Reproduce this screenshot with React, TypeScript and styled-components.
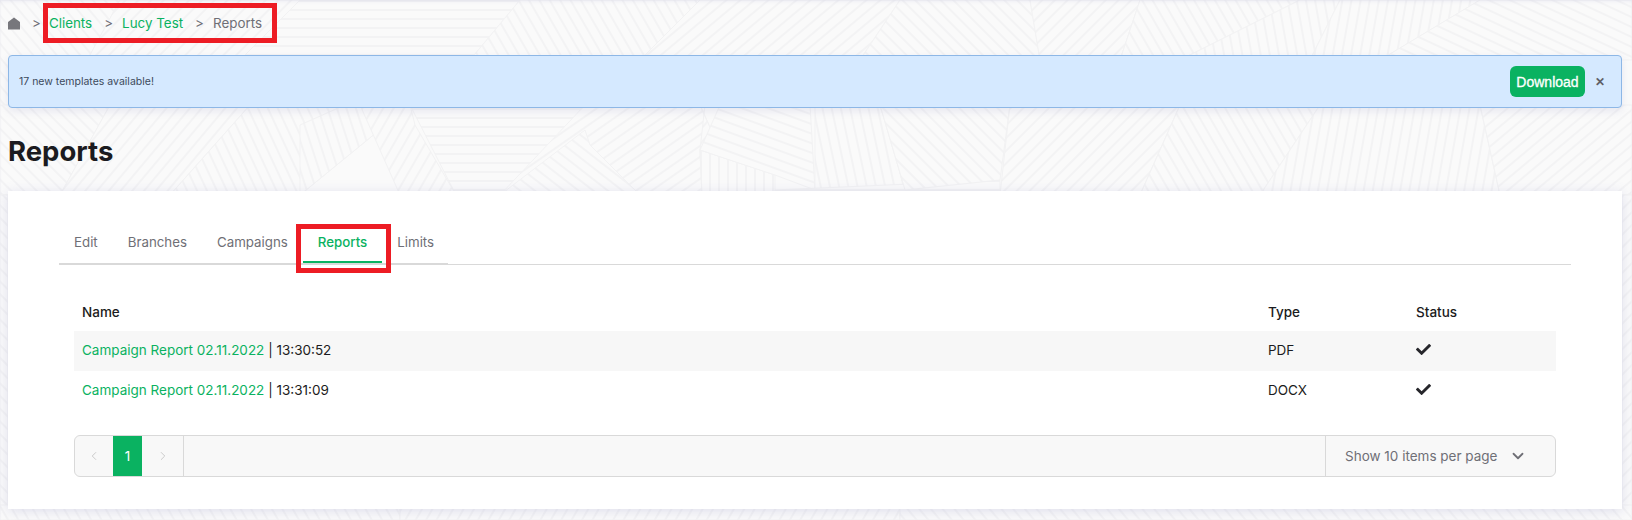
import React from "react";
import styled, { createGlobalStyle } from "styled-components";
import { ChevronDown, ChevronLeft, ChevronRight } from "lucide-react";
import { FaCheck } from "react-icons/fa";

// colors
const green = "#0ab261";
const grey = "#6f6f76";
const dark = "#1b1b20";
const redMark = "#ed1c24";
const lineColor = "#d9d9d9";

const tabs = ["Edit", "Branches", "Campaigns", "Reports", "Limits"];

const reports = [
  { name: "Campaign Report 02.11.2022", time: "13:30:52", type: "PDF" },
  { name: "Campaign Report 02.11.2022", time: "13:31:09", type: "DOCX" },
];

// hatched patches of the page wallpaper: points + stripe angle
const patches: [string, number][] = [
  ["0,0 120,0 60,110 0,150", 50],
  ["120,0 300,0 240,60 60,110", 135],
  ["300,0 520,0 470,60 240,60", 0],
  ["520,0 700,0 640,60 470,60", 60],
  ["700,0 900,0 860,60 640,60", 140],
  ["900,0 1030,0 1040,60 860,60", 45],
  ["1030,0 1140,0 1120,60 1040,60", 135],
  ["1140,0 1300,0 1180,60 1120,60", 60],
  ["1300,0 1340,0 1310,60 1180,60", 80],
  ["1340,0 1480,0 1380,60 1310,60", 100],
  ["1480,0 1632,0 1632,60 1380,60", 25],
  ["0,105 110,105 60,195 0,195", 45],
  ["110,105 250,105 170,195 60,195", 130],
  ["250,105 410,105 300,195 170,195", 65],
  ["300,195 410,105 345,105 300,125", 72],
  ["410,105 585,105 520,195 456,195", 0],
  ["410,105 415,125 456,195 400,195 360,105", 120],
  ["585,105 700,105 740,195 500,195", 145],
  ["585,130 590,145 640,195 500,195", 38],
  ["700,105 705,105 700,150 702,195 740,195", 130],
  ["700,150 775,175 775,195 702,195", 90],
  ["700,150 720,105 810,105 815,190 775,175", 20],
  ["815,105 880,105 905,190 815,190", 78],
  ["775,190 1000,180 1000,195 775,195", 0],
  ["880,105 1010,105 1000,180 905,190", 45],
  ["1010,105 1180,105 1140,195 1000,195", 135],
  ["1180,105 1320,105 1260,195 1140,195", 60],
  ["1320,105 1480,105 1500,195 1260,195", 100],
  ["1480,105 1632,105 1632,195 1500,195", 140],
  ["0,195 8,195 8,520 0,520", 45],
  ["1622,195 1632,195 1632,520 1622,520", 135],
  ["0,505 400,505 400,520 0,520", 60],
  ["400,505 900,505 900,520 400,520", 120],
  ["900,505 1632,505 1632,520 900,520", 50],
];

const angles = Array.from(new Set(patches.map((p) => p[1])));

const Wallpaper = () => (
  <WallpaperSvg width="1632" height="520">
    <defs>
      {angles.map((a) => (
        <pattern
          key={a}
          id={`hatch${a}`}
          width="9"
          height="9"
          patternUnits="userSpaceOnUse"
          patternTransform={`rotate(${a})`}
        >
          <rect width="9" height="9" fill="#fafafa" />
          <rect width="9" height="2" fill="#f3f3f4" />
        </pattern>
      ))}
    </defs>
    {patches.map(([points, a]) => (
      <polygon
        key={points}
        points={points}
        fill={`url(#hatch${a})`}
        stroke="#f2f2f3"
        strokeWidth="1"
      />
    ))}
  </WallpaperSvg>
);

const HomeIcon = () => (
  <svg width="12" height="13" viewBox="0 0 12 13">
    <path d="M6 0.5 L12 5 V12.5 H0 V5 Z" fill="#77777c" />
  </svg>
);

const App = () => {
  return (
    <Page>
      <GlobalStyle />
      <Wallpaper />
      <Breadcrumbs>
        <HomeIcon />
        <FirstSep>&gt;</FirstSep>
        <RedMark>
          <CrumbLink>Clients</CrumbLink>
          <Sep>&gt;</Sep>
          <CrumbLink>Lucy Test</CrumbLink>
          <Sep>&gt;</Sep>
          <CrumbCurrent>Reports</CrumbCurrent>
        </RedMark>
      </Breadcrumbs>

      <Banner>
        <BannerText>17 new templates available!</BannerText>
        <DownloadButton>Download</DownloadButton>
        <CloseMark>✕</CloseMark>
      </Banner>

      <Title>Reports</Title>

      <Card>
        <TabBar>
          {tabs.map((t) => (
            <Tab key={t} $active={t === "Reports"}>
              {t}
            </Tab>
          ))}
        </TabBar>

        <Table>
          <HeadRow>
            <span>Name</span>
            <span>Type</span>
            <span>Status</span>
          </HeadRow>
          {reports.map((r, i) => (
            <Row key={r.time} $striped={i === 0}>
              <span>
                <RowLink>{r.name}</RowLink> | {r.time}
              </span>
              <span>{r.type}</span>
              <FaCheck size={15} color="#26262b" />
            </Row>
          ))}
        </Table>

        <Pager>
          <PagerArrow>
            <ChevronLeft size={14} strokeWidth={1.5} />
          </PagerArrow>
          <PageNumber>1</PageNumber>
          <PagerArrow $last>
            <ChevronRight size={14} strokeWidth={1.5} />
          </PagerArrow>
          <PageSize>
            Show 10 items per page
            <ChevronDown size={18} strokeWidth={2.4} />
          </PageSize>
        </Pager>
      </Card>
    </Page>
  );
};

const GlobalStyle = createGlobalStyle`
  body {
    margin: 0;
    background: #fafafa;
    font-family: Inter, "Open Sans", sans-serif;
    overflow: hidden;
  }
`;

const Page = styled.div`
  position: relative;
  width: 1632px;
  height: 520px;
  padding: 3px 10px 0 8px;
  box-sizing: border-box;
  overflow: hidden;
  box-shadow: inset 0 3px 4px -2px rgba(110, 110, 180, 0.12);
`;

const WallpaperSvg = styled.svg`
  position: absolute;
  top: 0;
  left: 0;
  z-index: -1;
`;

const Breadcrumbs = styled.nav`
  display: flex;
  align-items: center;
  height: 40px;
  font-size: 13.4px;
`;

const RedMark = styled.div`
  display: flex;
  align-items: center;
  width: 234px;
  height: 40px;
  box-sizing: border-box;
  margin-left: 2px;
  padding-left: 1px;
  border: 5px solid ${redMark};
`;

const FirstSep = styled.span`
  color: ${grey};
  margin-left: 12px;
`;

const Sep = styled.span`
  color: ${grey};
  margin: 0 9px 0 12px;
`;

const CrumbLink = styled.a`
  color: ${green};
`;

const CrumbCurrent = styled.span`
  color: ${grey};
`;

const Banner = styled.div`
  display: flex;
  align-items: center;
  height: 53px;
  margin-top: 12px;
  padding: 0 16px 0 10px;
  box-sizing: border-box;
  background: #d5e9ff;
  border: 1px solid #8db7e6;
  border-radius: 4px;
  box-shadow: 0 3px 8px rgba(110, 110, 180, 0.14);
`;

const BannerText = styled.span`
  flex: 1;
  font-size: 10.5px;
  color: #3c4a5c;
`;

const DownloadButton = styled.button`
  width: 75px;
  height: 31px;
  padding: 0;
  border: none;
  border-radius: 6px;
  background: ${green};
  color: #fff;
  font: 14px "Liberation Sans", sans-serif;
  -webkit-text-stroke: 0.3px #fff;
`;

const CloseMark = styled.span`
  margin-left: 10px;
  font-size: 12px;
  font-weight: 700;
  color: #5f5f66;
`;

const Title = styled.h1`
  margin: 27px 0 0;
  height: 56px;
  font-size: 27.5px;
  line-height: 33px;
  font-weight: 700;
  color: ${dark};
`;

const Card = styled.section`
  height: 318px;
  padding: 33px 51px 0;
  box-sizing: border-box;
  background: #fff;
  box-shadow: 0 2px 12px rgba(110, 110, 180, 0.2);
`;

const TabBar = styled.div`
  display: flex;
  align-items: flex-start;
  height: 41px;
  box-sizing: border-box;
  padding-top: 1px;
  border-bottom: 1px solid ${lineColor};
  background: linear-gradient(#d9d9d9, #d9d9d9) 0 100% / 389px 1px no-repeat;
`;

const Tab = styled.div<{ $active?: boolean }>`
  position: relative;
  height: 38px;
  padding: 0 15px;
  line-height: 34px;
  font-size: 13.3px;
  color: ${(p) => (p.$active ? green : grey)};
  font-weight: ${(p) => (p.$active ? 500 : 400)};
  box-sizing: border-box;
  border-bottom: 2px solid ${(p) => (p.$active ? green : "transparent")};
  white-space: nowrap;

  /* red annotation round the active tab */
  &::after {
    content: ${(p) => (p.$active ? '""' : "none")};
    position: absolute;
    top: -1px;
    bottom: -12px;
    left: -7px;
    right: -9px;
    border: 5px solid ${redMark};
  }
`;

const Table = styled.div`
  margin: 0 15px;
  padding-top: 27px;
  font-size: 13.5px;
  color: ${dark};
`;

const HeadRow = styled.div`
  display: grid;
  grid-template-columns: 1186px 148px 1fr;
  align-items: center;
  height: 39px;
  font-weight: 500;
  > span {
    padding-left: 8px;
  }
`;

const Row = styled.div<{ $striped?: boolean }>`
  display: grid;
  grid-template-columns: 1186px 148px 1fr;
  align-items: center;
  height: 40px;
  background: ${(p) => (p.$striped ? "#f7f7f7" : "#fff")};
  > span {
    padding: 0 0 2px 8px;
  }
  > svg {
    margin: 0 0 4px 8px;
  }
`;

const RowLink = styled.a`
  color: ${green};
`;

const Pager = styled.div`
  display: flex;
  align-items: stretch;
  height: 42px;
  margin: 24px 15px 0;
  box-sizing: border-box;
  background: #f8f8f8;
  border: 1px solid ${lineColor};
  border-radius: 6px;
  overflow: hidden;
`;

const PagerArrow = styled.div<{ $last?: boolean }>`
  display: flex;
  align-items: center;
  justify-content: center;
  width: ${(p) => (p.$last ? 41 : 38)}px;
  color: #c4c4c4;
  border-right: ${(p) => (p.$last ? `1px solid ${lineColor}` : "none")};
`;

const PageNumber = styled.div`
  display: flex;
  align-items: center;
  justify-content: center;
  width: 29px;
  background: ${green};
  color: #fff;
  font-size: 13.5px;
`;

const PageSize = styled.div`
  display: flex;
  align-items: center;
  justify-content: space-between;
  width: 230px;
  margin-left: auto;
  padding: 0 28px 0 19px;
  box-sizing: border-box;
  border-left: 1px solid ${lineColor};
  font-size: 13.5px;
  color: ${grey};
`;

export default App;
